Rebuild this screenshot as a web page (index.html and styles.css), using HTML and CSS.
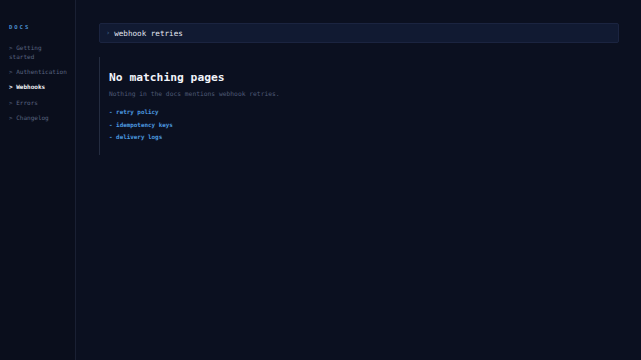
FILE: index.html
```html
<!DOCTYPE html>
<html lang="en">
<head>
<meta charset="UTF-8">
<meta name="viewport" content="width=device-width, initial-scale=1.0">
<title>Docs search</title>
<link rel="stylesheet" href="styles.css">
</head>
<body>
  <div class="layout">
    <nav class="sidebar">
      <div class="brand">DOCS</div>
      <ul class="nav">
        <li>&gt; Getting started</li>
        <li>&gt; Authentication</li>
        <li class="active">&gt; Webhooks</li>
        <li>&gt; Errors</li>
        <li>&gt; Changelog</li>
      </ul>
    </nav>
    <main class="main">
      <div class="search">
        <span class="prompt">&rsaquo;</span>
        <span class="query">webhook retries</span>
      </div>
      <section class="empty">
        <h1>No matching pages</h1>
        <p>Nothing in the docs mentions webhook retries.</p>
        <ul class="suggest">
          <li>- retry policy</li>
          <li>- idempotency keys</li>
          <li>- delivery logs</li>
        </ul>
      </section>
    </main>
  </div>
</body>
</html>
```

FILE: styles.css
```css
body {
  margin: 0;
  padding: 0;
  background-color: #0b1020;
  font-family: "DejaVu Sans Mono", "Liberation Mono", monospace;
  color: #e6e9f2;
}

.layout {
  display: flex;
  height: 100vh;
}

.sidebar {
  width: 76px;
  flex-shrink: 0;
  box-sizing: border-box;
  padding: 24px 3px 24px 9px;
  background-color: #0a0e1c;
  border-right: 1px solid #1a2033;
}

.brand {
  font-size: 5.5px;
  font-weight: bold;
  letter-spacing: 2px;
  color: #4a8fd0;
}

.nav {
  list-style: none;
  margin: 13px 0 0;
  padding: 0;
}

.nav li {
  width: 52px;
  font-size: 6px;
  line-height: 9px;
  color: #5a6580;
  margin-bottom: 6.2px;
}

.nav li:nth-child(2) {
  width: auto;
}

.nav li.active {
  color: #f2f4fa;
  font-weight: bold;
}

.main {
  flex: 1;
  padding: 23px 22px 0 23px;
}

.search {
  display: flex;
  align-items: center;
  gap: 4px;
  height: 20px;
  box-sizing: border-box;
  padding: 0 6px;
  background-color: #111a32;
  border: 1px solid #1b2440;
  border-radius: 2px;
}

.prompt {
  color: #3f6590;
  font-size: 7px;
}

.query {
  font-size: 7.6px;
  color: #e3e7f1;
}

.empty {
  margin-top: 14px;
  padding: 13px 9px 9px;
  border-left: 1px solid #242c40;
}

.empty h1 {
  margin: 0;
  font-size: 11.3px;
  font-weight: bold;
  line-height: 16px;
  color: #f2f4fa;
}

.empty p {
  margin: 3px 0 0;
  font-size: 6.3px;
  line-height: 10px;
  color: #4f5a76;
}

.suggest {
  list-style: none;
  margin: 9px 0 0;
  padding: 0;
}

.suggest li {
  font-size: 5.9px;
  font-weight: bold;
  line-height: 9px;
  margin-bottom: 3.5px;
  color: #4d9ce0;
}
```
